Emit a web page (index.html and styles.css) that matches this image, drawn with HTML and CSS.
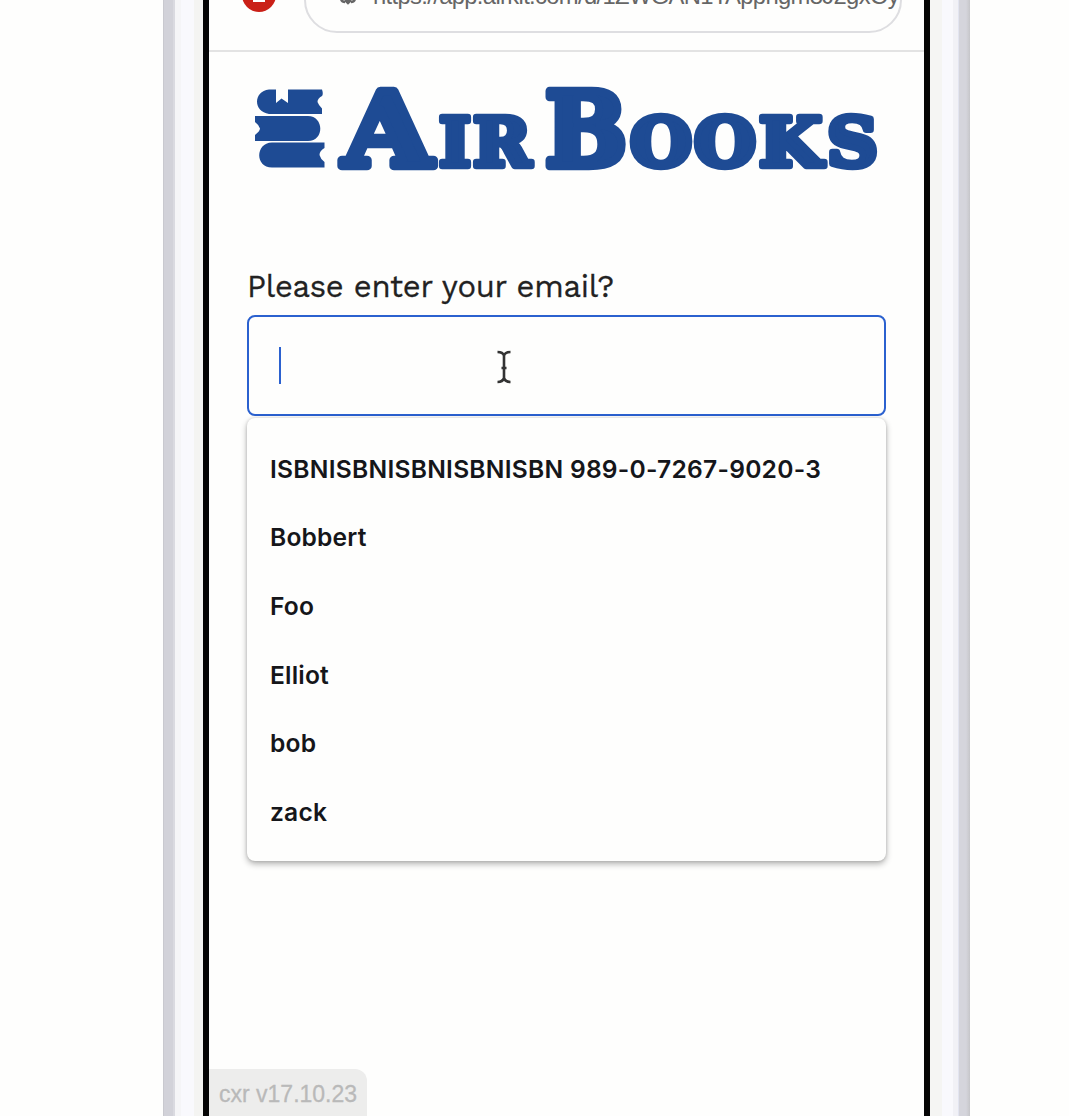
FILE: index.html
```html
<!DOCTYPE html>
<html lang="en">
<head>
<meta charset="utf-8">
<title>Air Books</title>
<link rel="stylesheet" href="styles.css">
</head>
<body>
<div class="phone">
  <div class="rail rail-left"></div>
  <main class="screen">
    <header class="browser-bar">
      <div class="badge"><span class="badge-mark"></span></div>
      <div class="address">
        <svg class="site-icon" width="20" height="20" viewBox="0 0 20 20"><path d="M3 14Q4 17 7 17M13 17Q16 17 17 14M10 12V18M7 15L10 18L13 15" fill="none" stroke="#666" stroke-width="2.500"/></svg>
        <span class="url">https://app.airkit.com/d/1ZWGAN1TAppngm8J2gxOy</span>
      </div>
    </header>
    <svg class="logo" width="716" height="120" viewBox="209 70 716 120" role="img" aria-label="Air Books">
      <g class="books">
        <path d="M269 89.500H276V103L281.500 98.500L288 103V89.500H322Q323.500 94 322 96Q317.500 98.500 317.500 102Q318.500 105 322 108.500V114H269C253 112 253 91 269 89.500Z"/>
        <path d="M255 116H308C324 116 325 141 308 141H255V135Q260 131 260 128.500Q259 125 255 122Z"/>
        <path d="M272 142.500H324.500V148Q319.500 151 319.500 155Q320.500 159 324.500 162V167.500H272C255 167.500 255 143 272 142.500Z"/>
      </g>
      <g class="wordmark">
        <text class="capital" x="343" y="166" font-size="102" textLength="89" lengthAdjust="spacingAndGlyphs">A</text>
        <text x="439" y="166" font-size="68" textLength="32" lengthAdjust="spacingAndGlyphs">I</text>
        <text x="473" y="166" font-size="68" textLength="58" lengthAdjust="spacingAndGlyphs">R</text>
        <text class="capital" x="545" y="166" font-size="102" textLength="82" lengthAdjust="spacingAndGlyphs">B</text>
        <text x="630" y="166" font-size="68" textLength="62" lengthAdjust="spacingAndGlyphs">O</text>
        <text x="694" y="166" font-size="68" textLength="62" lengthAdjust="spacingAndGlyphs">O</text>
        <text x="759" y="166" font-size="68" textLength="63" lengthAdjust="spacingAndGlyphs">K</text>
        <text x="827" y="166" font-size="68" textLength="51" lengthAdjust="spacingAndGlyphs">S</text>
      </g>
    </svg>
    <section class="form">
      <label class="prompt" for="email"><svg width="380" height="44"><text x="0" y="33.500" textLength="367" lengthAdjust="spacing">Please enter your email?</text></svg></label>
      <div class="field" id="email">
        <span class="caret"></span>
        <svg class="pointer" width="20" height="36" viewBox="0 0 20 36"><path d="M3.500 4C7 4 9 4.500 10 7.500C11 4.500 13 4 16.500 4M10 7V30M3.500 34C7 34 9 33 10 30C11 33 13 34 16.500 34M7.500 20H12.500"/></svg>
      </div>
      <ul class="suggestions">
        <li class="isbn">ISBNISBNISBNISBNISBN 989-0-7267-9020-3</li>
        <li>Bobbert</li>
        <li>Foo</li>
        <li>Elliot</li>
        <li>bob</li>
        <li>zack</li>
      </ul>
    </section>
    <footer class="version">cxr v17.10.23</footer>
  </main>
  <div class="rail rail-right"></div>
</div>
</body>
</html>
```
FILE: styles.css
```css
* { box-sizing: border-box; }
body { margin: 0; height: 1116px; overflow: hidden; background: #fefefd; font-family: Inter, sans-serif; }
.phone { display: flex; width: 807px; height: 1116px; margin-left: 163px; }
.rail { flex: none; height: 100%; }
.rail-left { width: 40px; background: linear-gradient(90deg, #c9c9cf 0 1px, #d2d2d9 1px 10px, #dadae0 10px 12px, #f5f5f7 12px 18px, #f9f9fd 18px 31px, #f4f4f2 31px); }
.rail-right { width: 40px; background: linear-gradient(90deg, #f5f5f3 0 12px, #f9f9fd 12px 23px, #f1f1f6 23px 28px, #e2e4f0 28px 29px, #d5d5dc 29px 36px, #cacace 39px, #c5c5c9 40px); }
.screen { display: flex; flex-direction: column; width: 727px; height: 100%; border: solid #050505; border-width: 0 6px; overflow: hidden; }
.browser-bar { display: flex; align-items: flex-end; flex: none; height: 52px; padding: 0 22px 17px 33px; border-bottom: 2px solid #e3e3e3; }
.badge { display: flex; justify-content: center; align-items: flex-end; width: 34px; height: 34px; margin-bottom: 21px; padding-bottom: 10px; border-radius: 50%; background: #ca2017; flex: none; }
.badge-mark { width: 12px; height: 6px; background: #fff; }
.address { display: flex; align-items: flex-end; flex: 1; min-width: 0; height: 66px; margin-left: 28px; padding: 0 0 26px 32px; border: 2px solid #dedee1; border-radius: 33px; }
.site-icon { flex: none; }
.url { margin-left: 15px; margin-bottom: -5px; font: 23.800px/28px "Liberation Sans", sans-serif; letter-spacing: -0.660px; color: #666; white-space: nowrap; }
.logo { display: block; flex: none; margin-top: 18px; }
.books { fill: #1e4b94; }
.wordmark { font-family: "DejaVu Serif", serif; font-weight: bold; fill: #1e4b94; stroke: #1e4b94; stroke-width: 6.500px; stroke-linejoin: round; }
.capital { stroke-width: 8.500px; }
.form { display: flex; flex-direction: column; padding: 73px 38px 0; }
.prompt { height: 52px; font: 31px "Work Sans", "Noto Sans", sans-serif; color: #222; }
.prompt svg { display: block; fill: #222; stroke: #222; stroke-width: .3px; overflow: visible; }
.field { display: flex; align-items: center; height: 101px; padding: 0 30px; border: 2px solid #2b61cf; border-radius: 8px; }
.caret { width: 2px; height: 37px; background: #2b61cf; }
.pointer { margin-left: 213px; fill: none; stroke: #333; stroke-width: 2.600px; }
.suggestions { height: 443px; margin: 2px 0 0; padding: 16.500px 23px; list-style: none; border-radius: 8px; background: #fefefd; box-shadow: 0 3px 6px rgba(0,0,0,.3), 0 0 3px rgba(0,0,0,.15); }
.suggestions li { height: 68.700px; line-height: 68px; font-size: 24.600px; font-weight: 560; letter-spacing: .18px; color: #15161a; white-space: nowrap; }
.suggestions .isbn { letter-spacing: .25px; }
.version { width: 158px; height: 47px; margin-top: auto; padding-left: 10px; border-radius: 0 12px 0 0; background: #ededec; color: #b9b9b9; font: 23px/50px "Liberation Sans", sans-serif; -webkit-text-stroke: .3px #b9b9b9; }
```
